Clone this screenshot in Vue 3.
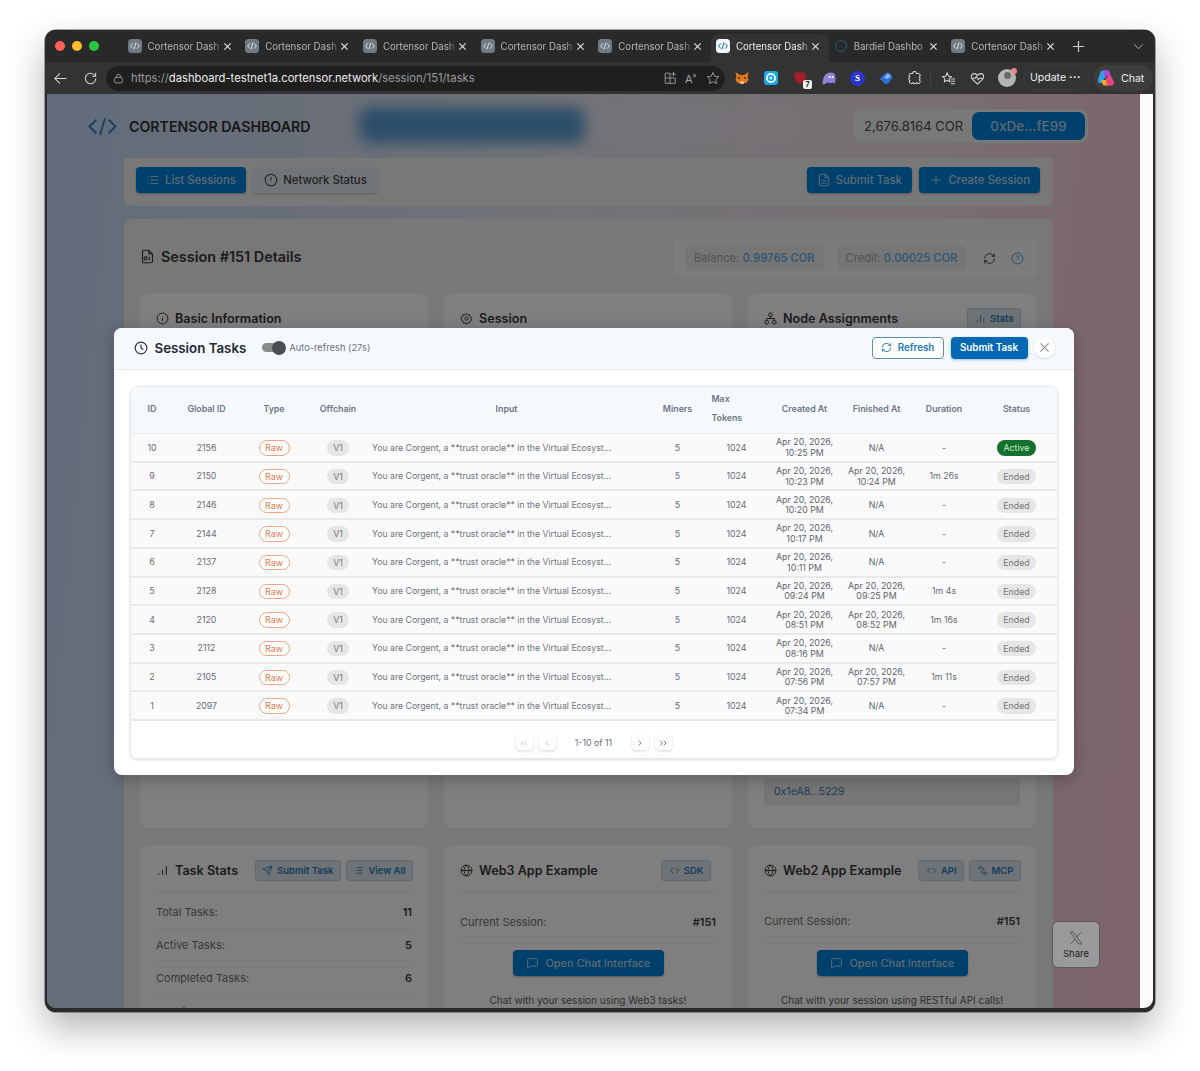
<script setup>
const tabs = [
  { title: 'Cortensor Dash' },
  { title: 'Cortensor Dash' },
  { title: 'Cortensor Dash' },
  { title: 'Cortensor Dash' },
  { title: 'Cortensor Dash' },
  { title: 'Cortensor Dash', active: true },
  { title: 'Bardiel Dashbo', ring: true },
  { title: 'Cortensor Dash' },
]

const tasks = [
  { id: 10, gid: 2156, created: ['Apr 20, 2026,', '10:25 PM'], finished: null, duration: '-', status: 'Active' },
  { id: 9, gid: 2150, created: ['Apr 20, 2026,', '10:23 PM'], finished: ['Apr 20, 2026,', '10:24 PM'], duration: '1m 26s', status: 'Ended' },
  { id: 8, gid: 2146, created: ['Apr 20, 2026,', '10:20 PM'], finished: null, duration: '-', status: 'Ended' },
  { id: 7, gid: 2144, created: ['Apr 20, 2026,', '10:17 PM'], finished: null, duration: '-', status: 'Ended' },
  { id: 6, gid: 2137, created: ['Apr 20, 2026,', '10:11 PM'], finished: null, duration: '-', status: 'Ended' },
  { id: 5, gid: 2128, created: ['Apr 20, 2026,', '09:24 PM'], finished: ['Apr 20, 2026,', '09:25 PM'], duration: '1m 4s', status: 'Ended' },
  { id: 4, gid: 2120, created: ['Apr 20, 2026,', '08:51 PM'], finished: ['Apr 20, 2026,', '08:52 PM'], duration: '1m 16s', status: 'Ended' },
  { id: 3, gid: 2112, created: ['Apr 20, 2026,', '08:16 PM'], finished: null, duration: '-', status: 'Ended' },
  { id: 2, gid: 2105, created: ['Apr 20, 2026,', '07:56 PM'], finished: ['Apr 20, 2026,', '07:57 PM'], duration: '1m 11s', status: 'Ended' },
  { id: 1, gid: 2097, created: ['Apr 20, 2026,', '07:34 PM'], finished: null, duration: '-', status: 'Ended' },
]

const inputText = 'You are Corgent, a **trust oracle** in the Virtual Ecosyst...'
const colWidths = [43, 66, 69, 59, 278, 64, 54, 82, 62, 73, 76]

const stats = [
  { label: 'Total Tasks:', value: 11 },
  { label: 'Active Tasks:', value: 5 },
  { label: 'Completed Tasks:', value: 6 },
  { label: 'Running Tasks:', value: 1 },
]
</script>

<template>
  <div class="screen">
    <div class="window">
      <!-- tab strip -->
      <div class="tabstrip">
        <div class="lights"><i class="red"></i><i class="yellow"></i><i class="green"></i></div>
        <div v-for="(tab, i) in tabs" :key="i" class="tab" :class="{ active: tab.active }">
          <span v-if="tab.ring" class="ring"></span>
          <svg v-else class="fav" viewBox="0 0 14 14">
            <rect width="14" height="14" rx="3.5" />
            <path d="M5 4.3 2.6 7 5 9.7M9 4.3 11.4 7 9 9.7M7.9 3.6 6.1 10.4" />
          </svg>
          <span class="tab-title">{{ tab.title }}</span>
          <svg class="tab-x" viewBox="0 0 10 10"><path d="M1.5 1.5 8.5 8.5M8.5 1.5 1.5 8.5" /></svg>
        </div>
        <svg class="newtab" viewBox="0 0 14 14"><path d="M7 1V13M1 7H13" /></svg>
        <svg class="tabmenu" viewBox="0 0 12 8"><path d="M1 1.5 6 6.5 11 1.5" /></svg>
      </div>

      <!-- browser toolbar -->
      <div class="toolbar">
        <svg class="tool back" viewBox="0 0 16 16"><path d="M14.5 8H2M7.5 2.5 2 8l5.5 5.5" /></svg>
        <svg class="tool reload" viewBox="0 0 16 16"><path d="M13.6 8a5.6 5.6 0 1 1-1.7-4L13.5 5.5M13.5 1.8V5.5H9.8" /></svg>
        <div class="omnibox">
          <svg class="lock" viewBox="0 0 12 12"><rect x="1.8" y="4.8" width="8.4" height="6" rx="1.5" /><path d="M4 4.8V3.4a2 2 0 0 1 4 0v1.4" /></svg>
          <span class="url">https://<b>dashboard-testnet1a.cortensor.network</b>/session/151/tasks</span>
          <svg class="omni-ic" viewBox="0 0 16 16"><path d="M8 2.500H2.500V14H14V8M2.500 8H14M8 2.500V14M12 1V6M9.500 3.500H14.500" /></svg>
          <span class="read-aloud">A<sup>»</sup></span>
          <svg class="omni-ic" viewBox="0 0 16 16"><path d="M8 1.700 10 6l4.600.6-3.400 3.200.9 4.600L8 12.200l-4.100 2.200.9-4.600L1.400 6.600 6 6Z" /></svg>
        </div>
        <div class="exts">
          <svg class="ext" viewBox="0 0 16 16"><path fill="#e2761b" d="M1.500 2 6 5h4l4.500-3-.8 5 .8 3-2.500 3.500-2.500-1h-3l-2.500 1L1.500 10l.8-3Z" /><path fill="#f6c9a0" d="M5.500 11.500h5L9.500 14h-3Z" /><circle cx="5" cy="8" r="1" fill="#333" /><circle cx="11" cy="8" r="1" fill="#333" /></svg>
          <svg class="ext" viewBox="0 0 16 16"><rect x="1" y="1" width="14" height="14" rx="3" fill="#1aa6e8" /><circle cx="8" cy="8" r="4.200" fill="none" stroke="#fff" stroke-width="1.800" /><path d="M6.500 8h3M8 6.500v3" stroke="#fff" stroke-width="1.100" /></svg>
          <span class="ext-badged">
            <svg class="ext" viewBox="0 0 16 16"><path fill="#a31d2b" d="M3 2.500h9l2 3-1 6-5 3-4-3-2-6Z" /></svg>
            <em>7</em>
          </span>
          <svg class="ext" viewBox="0 0 16 16"><path fill="#8f82d8" d="M1.500 14C2 6 5 2.500 9.500 2.500S15 6 14.500 10.500 12.500 13 11.500 12.500 9.500 14 8 13 6 13 5 13.500 2.500 15 1.500 14Z" /><circle cx="8.500" cy="7" r="1" fill="#fff" /><circle cx="11.500" cy="7" r="1" fill="#fff" /></svg>
          <span class="ext-s">S</span>
          <svg class="ext" viewBox="0 0 16 16"><path fill="#2e6fd8" d="M1.500 9 8 3c3-1.500 5.500 1.500 6.500 5L11 12.500c-1.500 2-4 1.500-5 .5L4 10.500Z" /><path fill="#8cb8f2" d="M6 7.500 10 3.500 13 6.500 9 9Z" /></svg>
          <svg class="tool puzzle" viewBox="0 0 16 16"><path d="M6 2.500a2 2 0 0 1 4 0c0 .5 2.500-.3 3.500.7s.2 2.800-.3 3.300a2 2 0 0 1 0 3c.5.5 1.300 2.300.3 3.300s-2.800.2-3.300-.3a2 2 0 0 1-3.500 0c-.5.5-2.300 1.300-3.300.3S2.500 10.500 3 10a2 2 0 0 1 0-3.500C2.500 6 1.700 4.200 2.700 3.200S5.500 3 6 2.500Z" /></svg>
          <i class="sep"></i>
          <svg class="tool favs" viewBox="0 0 16 16"><path d="M6.500 2 8 5.500l3 .4-2.300 2.200.6 3.400-2.800-1.600-2.900 1.600.6-3.400L1.800 5.900l3.200-.4ZM10.500 8.500H15M10.500 11H15M10.500 13.500H15" /></svg>
          <svg class="tool heart" viewBox="0 0 16 16"><path d="M8 14 2.200 8.300C.5 6.300 1.500 2.800 4.500 2.800 6 2.800 7.300 3.600 8 4.800c.7-1.200 2-2 3.500-2 3 0 4 3.500 2.300 5.500ZM2 7.800h3.500l1.200-2 2 3.500 1.300-1.500H14" /></svg>
          <span class="avatar"><i></i><b></b></span>
          <span class="update">Update <span class="dots">···</span></span>
          <span class="chat">
            <svg class="copilot" viewBox="0 0 18 18">
              <path fill="#2ea3e8" d="M6 1.500h4L8 8 5 14H3.500C1.500 14 .5 12 1 10.500L3.500 3C4 2 5 1.500 6 1.500Z" />
              <path fill="#a44fd8" d="M6 1.500h4.500c1 0 1.800.7 2 1.500L14 7H9.500L8 11Z" />
              <path fill="#f5a623" d="M12 16.500H7.500c-1 0-1.800-.7-2-1.500L4.500 11H9l1.500-3.500Z" />
              <path fill="#e8467c" d="M12 16.500h2.500c2 0 3-2 2.500-3.500L14 7h-3l-2 5 1 4Z" />
            </svg>
            Chat
          </span>
        </div>
      </div>

      <!-- browser content -->
      <div class="viewport">
        <div class="page">
          <header class="app-header">
            <div class="brand">
              <svg class="logo" viewBox="0 0 28 18"><path d="M8 2.500 1.500 9 8 15.500M20 2.500 26.500 9 20 15.500M16.500 1 11.500 17" /></svg>
              <span>CORTENSOR DASHBOARD</span>
            </div>
            <div class="blurred-nav"></div>
            <div class="wallet">
              <span>2,676.8164 COR</span>
              <span class="wallet-btn">0xDe...fE99</span>
            </div>
          </header>

          <main class="content">
            <section class="action-card">
              <div class="btn-row">
                <span class="btn solid">
                  <svg class="ic" viewBox="0 0 24 24"><path d="M8 6h13M8 12h13M8 18h13M3 6h1M3 12h1M3 18h1" /></svg>List Sessions
                </span>
                <span class="btn ghost">
                  <svg class="ic" viewBox="0 0 24 24"><circle cx="12" cy="12" r="10" /><path d="M12 7v6M12 16.500v.5" /></svg>Network Status
                </span>
              </div>
              <div class="btn-row">
                <span class="btn solid">
                  <svg class="ic" viewBox="0 0 24 24"><path d="M14 2H6a2 2 0 0 0-2 2v16a2 2 0 0 0 2 2h12a2 2 0 0 0 2-2V8ZM14 2v6h6M8 13h8M8 17h8" /></svg>Submit Task
                </span>
                <span class="btn solid">
                  <svg class="ic" viewBox="0 0 24 24"><path d="M12 4v16M4 12h16" /></svg>Create Session
                </span>
              </div>
            </section>

            <section class="session-card">
              <div class="session-head">
                <h2>
                  <svg class="ic head-ic" viewBox="0 0 24 24"><path d="M14 2H6a2 2 0 0 0-2 2v16a2 2 0 0 0 2 2h12a2 2 0 0 0 2-2V8ZM14 2v6h6" /><circle cx="9" cy="15" r="2.500" /><path d="M15 12.500V18" /></svg>
                  Session #151 Details
                </h2>
                <div class="balances">
                  <span class="chip bal">Balance: <b>0.99765 COR</b></span>
                  <span class="chip cred">Credit: <b>0.00025 COR</b></span>
                  <svg class="ic bal-ic" viewBox="0 0 24 24"><path d="M21 12a9 9 0 0 1-15.500 6.300L3 16M3 12a9 9 0 0 1 15.500-6.300L21 8M21 3v5h-5M3 21v-5h5" /></svg>
                  <svg class="ic bal-ic help" viewBox="0 0 24 24"><circle cx="12" cy="12" r="10" /><path d="M9.500 9.500a2.500 2.500 0 1 1 3.500 2.300c-.7.400-1 1-1 1.700M12 17v.5" /></svg>
                </div>
              </div>

              <div class="grid tall">
                <article class="panel">
                  <div class="panel-title">
                    <h3><svg class="ic" viewBox="0 0 24 24"><circle cx="12" cy="12" r="10" /><path d="M12 11v6M12 7.500v.5" /></svg>Basic Information</h3>
                  </div>
                </article>
                <article class="panel">
                  <div class="panel-title">
                    <h3><svg class="ic" viewBox="0 0 24 24"><circle cx="12" cy="12" r="3" /><path d="M12 2.500l2 3 3.500-.5 1 3.500 3 2-1.500 2 1.500 2.500-3 2-1 3.500-3.500-.5-2 3-2-3-3.500.5-1-3.500-3-2L3 12.500 1.500 10.500l3-2 1-3.500 3.500.5Z" /></svg>Session</h3>
                  </div>
                </article>
                <article class="panel">
                  <div class="panel-title">
                    <h3><svg class="ic" viewBox="0 0 24 24"><rect x="9" y="2" width="6" height="6" rx="1" /><rect x="2" y="16" width="6" height="6" rx="1" /><rect x="16" y="16" width="6" height="6" rx="1" /><path d="M12 8v4M5 16v-4h14v4" /></svg>Node Assignments</h3>
                    <span class="btn tint small stats-btn"><svg class="ic" viewBox="0 0 24 24"><path d="M5 20v-5M12 20V5M19 20v-9" /></svg>Stats</span>
                  </div>
                  <div class="addr">0x1eA8...5229</div>
                </article>
              </div>

              <div class="grid">
                <article class="panel">
                  <div class="panel-title ruled">
                    <h3><svg class="ic" viewBox="0 0 24 24"><path d="M5 20v-3M12 20v-9M19 20V4" /></svg>Task Stats</h3>
                    <div class="btn-row tight">
                      <span class="btn tint small"><svg class="ic" viewBox="0 0 24 24"><path d="M22 2 15 22l-4-9-9-4ZM22 2 11 13" /></svg>Submit Task</span>
                      <span class="btn tint small"><svg class="ic" viewBox="0 0 24 24"><path d="M8 6h13M8 12h13M8 18h13M3 6h1M3 12h1M3 18h1" /></svg>View All</span>
                    </div>
                  </div>
                  <div class="stat-list">
                    <div v-for="s in stats" :key="s.label" class="stat">
                      <span>{{ s.label }}</span><b>{{ s.value }}</b>
                    </div>
                  </div>
                </article>

                <article class="panel">
                  <div class="panel-title ruled">
                    <h3><svg class="ic" viewBox="0 0 24 24"><circle cx="12" cy="12" r="10" /><path d="M2 12h20M12 2c6 6 6 14 0 20M12 2c-6 6-6 14 0 20" /></svg>Web3 App Example</h3>
                    <span class="btn tint small sdk"><svg class="ic" viewBox="0 0 24 24"><path d="M9 6l-6 6 6 6M15 6l6 6-6 6" /></svg>SDK</span>
                  </div>
                  <div class="current web3"><span>Current Session:</span><b>#151</b></div>
                  <div class="chat-cta">
                    <span class="btn solid wide"><svg class="ic" viewBox="0 0 24 24"><path d="M21 15a2 2 0 0 1-2 2H7l-4 4V5a2 2 0 0 1 2-2h14a2 2 0 0 1 2 2Z" /></svg>Open Chat Interface</span>
                    <p>Chat with your session using Web3 tasks!</p>
                  </div>
                </article>

                <article class="panel">
                  <div class="panel-title ruled">
                    <h3><svg class="ic" viewBox="0 0 24 24"><circle cx="12" cy="12" r="10" /><path d="M2 12h20M12 2c6 6 6 14 0 20M12 2c-6 6-6 14 0 20" /></svg>Web2 App Example</h3>
                    <div class="btn-row tight">
                      <span class="btn tint small"><svg class="ic" viewBox="0 0 24 24"><path d="M9 6l-6 6 6 6M15 6l6 6-6 6" /></svg>API</span>
                      <span class="btn tint small"><svg class="ic" viewBox="0 0 24 24"><circle cx="6" cy="6" r="3" /><circle cx="18" cy="18" r="3" /><path d="M9 6h3a3 3 0 0 1 0 6h-0a3 3 0 0 0 0 6h3" /></svg>MCP</span>
                    </div>
                  </div>
                  <div class="current"><span>Current Session:</span><b>#151</b></div>
                  <div class="chat-cta">
                    <span class="btn solid wide"><svg class="ic" viewBox="0 0 24 24"><path d="M21 15a2 2 0 0 1-2 2H7l-4 4V5a2 2 0 0 1 2-2h14a2 2 0 0 1 2 2Z" /></svg>Open Chat Interface</span>
                    <p>Chat with your session using RESTful API calls!</p>
                  </div>
                </article>
              </div>
            </section>
          </main>

          <!-- dim layer and dialog -->
          <div class="backdrop">
            <div class="modal">
              <div class="modal-head">
                <svg class="clock" viewBox="0 0 24 24"><circle cx="12" cy="12" r="10" /><path d="M12 6v6l4 2.500" /></svg>
                <h2>Session Tasks</h2>
                <span class="switch"><i></i></span>
                <span class="auto">Auto-refresh (27s)</span>
                <span class="head-actions">
                  <span class="refresh">
                    <svg viewBox="0 0 24 24"><path d="M21 12a9 9 0 0 1-15.500 6.300L3 16M3 12a9 9 0 0 1 15.500-6.300L21 8M21 3v5h-5M3 21v-5h5" /></svg>Refresh
                  </span>
                  <span class="submit">Submit Task</span>
                  <span class="close"><svg viewBox="0 0 12 12"><path d="M1.500 1.500l9 9M10.500 1.500l-9 9" /></svg></span>
                </span>
              </div>

              <div class="modal-body">
                <div class="table-card">
                  <table>
                    <colgroup>
                      <col v-for="(w, i) in colWidths" :key="i" :style="{ width: w + 'px' }" />
                    </colgroup>
                    <thead>
                      <tr>
                        <th>ID</th>
                        <th>Global ID</th>
                        <th>Type</th>
                        <th>Offchain</th>
                        <th>Input</th>
                        <th>Miners</th>
                        <th class="maxtok">Max<br />Tokens</th>
                        <th>Created At</th>
                        <th>Finished At</th>
                        <th>Duration</th>
                        <th class="last">Status</th>
                      </tr>
                    </thead>
                    <tbody>
                      <tr v-for="t in tasks" :key="t.id">
                        <td>{{ t.id }}</td>
                        <td>{{ t.gid }}</td>
                        <td><span class="pill raw">Raw</span></td>
                        <td><span class="pill grey v1">V1</span></td>
                        <td class="input">{{ inputText }}</td>
                        <td>5</td>
                        <td>1024</td>
                        <td class="date">{{ t.created[0] }}<br />{{ t.created[1] }}</td>
                        <td class="date">
                          <template v-if="t.finished">{{ t.finished[0] }}<br />{{ t.finished[1] }}</template>
                          <template v-else>N/A</template>
                        </td>
                        <td>{{ t.duration }}</td>
                        <td class="last">
                          <span class="pill status" :class="t.status === 'Active' ? 'on' : 'grey'">{{ t.status }}</span>
                        </td>
                      </tr>
                    </tbody>
                  </table>
                  <div class="pager">
                    <span class="pg dim"><svg viewBox="0 0 12 12"><path d="M5.500 3 2.500 6l3 3M9.500 3l-3 3 3 3" /></svg></span>
                    <span class="pg dim"><svg viewBox="0 0 12 12"><path d="M7.500 3l-3 3 3 3" /></svg></span>
                    <span class="pg-text">1-10 of 11</span>
                    <span class="pg"><svg viewBox="0 0 12 12"><path d="M4.500 3l3 3-3 3" /></svg></span>
                    <span class="pg"><svg viewBox="0 0 12 12"><path d="M2.500 3l3 3-3 3M6.500 3l3 3-3 3" /></svg></span>
                  </div>
                </div>
              </div>
            </div>

            <div class="share">
              <svg viewBox="0 0 24 24"><path d="M3 3h5l13 18h-5ZM20 3l-7 8M4 21l7-8" /></svg>
              <span>Share</span>
            </div>
          </div>
        </div>
        <div class="scrolltrack"></div>
      </div>
    </div>
  </div>
</template>

<style>
html,
body {
  margin: 0;
  background: #fff;
}
</style>

<style scoped>
.screen {
  width: 1200px;
  height: 1071px;
  padding: 30px 45px 59px;
  box-sizing: border-box;
  overflow: hidden;
  background: #fff;
  font-family: Inter, "Noto Sans", sans-serif;
}
.window {
  height: 982px;
  background: #2b2b2b;
  border-radius: 11px;
  box-shadow: 0 0 0 .5px #555, 0 16px 36px rgba(0, 0, 0, .3);
  display: flex;
  flex-direction: column;
  overflow: hidden;
}

/* tab strip */
.tabstrip {
  height: 32px;
  display: flex;
  align-items: flex-end;
  background: #292929;
  flex: none;
  position: relative;
}
.lights {
  width: 77.500px;
  height: 28px;
  padding-left: 10px;
  padding-bottom: 4px;
  box-sizing: border-box;
  display: flex;
  gap: 7px;
  align-items: center;
  flex: none;
}
.lights i {
  width: 10px;
  height: 10px;
  border-radius: 50%;
}
.red { background: #ff5f57; }
.yellow { background: #febc2e; }
.green { background: #28c840; }
.tab {
  width: 117.700px;
  height: 28px;
  flex: none;
  box-sizing: border-box;
  padding: 0 0 4px 5px;
  display: flex;
  align-items: center;
  border-radius: 8px 8px 0 0;
  color: #b5b5b5;
  font-size: 9.700px;
  position: relative;
}
.tab.active {
  background: #333;
  color: #eee;
}
.fav {
  width: 14px;
  height: 14px;
  flex: none;
  fill: #6f7a82;
}
.fav path {
  fill: none;
  stroke: #dde;
  stroke-width: 1;
}
.active .fav { fill: #f4f7fb; }
.active .fav path { stroke: #1670bd; }
.ring {
  width: 12px;
  height: 12px;
  margin: 0 1px;
  box-sizing: border-box;
  border-radius: 50%;
  border: 1.500px solid #1f5f72;
  flex: none;
}
.tab-title {
  width: 73px;
  margin-left: 6px;
  white-space: nowrap;
  -webkit-mask-image: linear-gradient(90deg, #000 88%, rgba(0, 0, 0, .25));
  mask-image: linear-gradient(90deg, #000 88%, rgba(0, 0, 0, .25));
}
.tab-x {
  width: 9px;
  height: 9px;
  margin-left: 2px;
  flex: none;
  fill: none;
  stroke: #ddd;
  stroke-width: 1.300;
}
.newtab {
  position: absolute;
  left: 1026.500px;
  top: 9.500px;
  width: 13px;
  height: 13px;
  fill: none;
  stroke: #ccc;
  stroke-width: 1.300;
}
.tabmenu {
  position: absolute;
  left: 1087.500px;
  top: 13px;
  width: 11px;
  height: 7px;
  fill: none;
  stroke: #bbb;
  stroke-width: 1.100;
}

/* toolbar */
.toolbar {
  height: 32px;
  flex: none;
  display: flex;
  align-items: center;
  background: #333;
  padding-left: 8px;
}
.tool {
  width: 15px;
  height: 15px;
  fill: none;
  stroke: #d6d6d6;
  stroke-width: 1.100;
  flex: none;
}
.back { margin-right: 15px; }
.reload { margin-right: 8px; }
.omnibox {
  width: 619px;
  height: 25px;
  flex: none;
  box-sizing: border-box;
  border-radius: 13px;
  background: #1f1f1f;
  display: flex;
  align-items: center;
  padding: 0 5px 0 7px;
}
.lock {
  width: 11px;
  height: 11px;
  fill: none;
  stroke: #a0a0a0;
  stroke-width: 1;
  flex: none;
}
.url {
  margin-left: 7px;
  font-size: 11.230px;
  color: #9a9a9a;
  flex: 1;
  white-space: nowrap;
}
.url b {
  color: #ececec;
  font-weight: 400;
}
.omni-ic {
  width: 14px;
  height: 14px;
  fill: none;
  stroke: #a5a5a5;
  stroke-width: 1;
}
.read-aloud {
  width: 14px;
  margin: 0 7px 0 8px;
  font-size: 11px;
  color: #a5a5a5;
}
.read-aloud sup {
  font-size: 7px;
}
.exts {
  display: flex;
  align-items: center;
  flex: 1;
  padding-left: 9px;
}
.ext {
  width: 16px;
  height: 16px;
  display: block;
}
.exts > .ext,
.exts > .ext-badged,
.exts > .ext-s { margin-right: 13px; }
.ext-badged {
  position: relative;
  width: 16px;
  height: 16px;
}
.ext-badged em {
  position: absolute;
  right: -4px;
  bottom: -3px;
  width: 9px;
  height: 9px;
  background: #eee;
  border-radius: 2px;
  color: #222;
  font: 700 7px/9px Inter, sans-serif;
  text-align: center;
}
.ext-s {
  width: 15px;
  height: 15px;
  border-radius: 50%;
  background: #2a35c9;
  color: #fff;
  font: 700 9px/15px "Liberation Serif", serif;
  text-align: center;
}
.puzzle { margin-right: 8px; }
.sep {
  width: 1px;
  height: 17px;
  background: #444;
  margin-right: 10px;
}
.favs { margin-right: 14px; }
.heart { margin-right: 13px; }
.avatar {
  position: relative;
  width: 18px;
  height: 18px;
  border-radius: 50%;
  background: #b5b5b5;
  flex: none;
}
.avatar i {
  position: absolute;
  left: 5.500px;
  top: 3px;
  width: 7px;
  height: 7px;
  border-radius: 50%;
  background: #6a6a6a;
}
.avatar b {
  position: absolute;
  right: -1px;
  top: -1px;
  width: 6px;
  height: 6px;
  border-radius: 50%;
  background: #f08a8a;
}
.update {
  height: 26px;
  margin-left: 7px;
  padding: 0 6px;
  border-radius: 13px;
  border: 1px solid #3d3d3d;
  box-sizing: border-box;
  width: 66px;
  font-size: 10.500px;
  line-height: 24px;
  color: #eee;
  white-space: nowrap;
}
.dots {
  font-weight: 700;
  letter-spacing: .5px;
}
.chat {
  margin-left: 5px;
  height: 26px;
  width: 59px;
  padding-left: 3px;
  box-sizing: border-box;
  border-radius: 13px;
  background: #3d3d3d;
  display: flex;
  align-items: center;
  gap: 6px;
  font-size: 10.500px;
  color: #eee;
}
.copilot {
  width: 18px;
  height: 18px;
  flex: none;
}

/* page underneath */
.viewport {
  flex: 1;
  margin: 0 2px 4px;
  display: flex;
  border-radius: 0 0 9px 9px;
  overflow: hidden;
  min-height: 0;
}
.page {
  width: 1093px;
  flex: none;
  position: relative;
  overflow: hidden;
  background: linear-gradient(96deg, #c3d8f6 0%, #e4e6ee 45%, #f0dde6 75%, #fcc4d8 100%);
}
.scrolltrack {
  flex: 1;
  background: #fbfbfb;
}
.app-header {
  height: 64px;
  padding: 0 52px 0 41px;
  box-sizing: border-box;
  display: flex;
  align-items: center;
  gap: 47px;
}
.brand {
  display: flex;
  align-items: center;
  gap: 12px;
  width: 224px;
  flex: none;
  font-size: 14.200px;
  font-weight: 600;
  color: #303030;
  white-space: nowrap;
}
.logo {
  width: 29px;
  height: 19px;
  fill: none;
  stroke: #2c7cc0;
  stroke-width: 1.800;
  flex: none;
}
.blurred-nav {
  width: 226px;
  height: 36px;
  margin-top: -2px;
  border-radius: 10px;
  background: #5a9cd0;
  box-shadow: 226px 0 20px rgba(255, 255, 255, .08);
  filter: blur(7px);
  flex: none;
}
.wallet {
  margin-left: auto;
  height: 34px;
  width: 235px;
  box-sizing: border-box;
  padding: 3px;
  border-radius: 9px;
  background: #f0f0f0;
  display: flex;
  align-items: center;
  justify-content: flex-end;
  gap: 9px;
  font-size: 13px;
  color: #4c4c4c;
  white-space: nowrap;
}
.wallet-btn {
  width: 113px;
  height: 28px;
  line-height: 28px;
  border-radius: 7px;
  background: #0080d8;
  color: #b8d4ea;
  text-align: center;
  font-size: 13.500px;
  font-weight: 500;
}
.content {
  width: 929px;
  margin-left: 77px;
  display: flex;
  flex-direction: column;
  gap: 13px;
}
.action-card {
  height: 48px;
  padding: 9px 13px 0 12px;
  box-sizing: border-box;
  display: flex;
  justify-content: space-between;
  background: #f0f0f0;
  border-radius: 0 0 8px 8px;
}
.btn-row {
  display: flex;
  gap: 7.500px;
}
.btn-row.tight { gap: 7px; }
.btn {
  height: 26px;
  display: inline-flex;
  align-items: center;
  gap: 5px;
  padding: 0 10px;
  box-sizing: border-box;
  border-radius: 4px;
  font-size: 11.300px;
  font-weight: 500;
  white-space: nowrap;
}
.ic {
  width: 14px;
  height: 14px;
  fill: none;
  stroke: currentColor;
  stroke-width: 1.800;
  flex: none;
}
.btn.solid {
  background: #0080d8;
  color: #b8d4ea;
  box-shadow: 0 1px 2px rgba(0, 0, 0, .3);
}
.btn.ghost {
  padding: 0 11px;
  background: #e6ecf2;
  color: #404040;
  box-shadow: 0 1px 2px rgba(0, 0, 0, .2);
}
.session-card {
  background: #f0f0f0;
  border-radius: 8px 8px 0 0;
  padding: 20px 16px 0;
  flex: 1;
}
.session-head {
  height: 38px;
  margin-bottom: 16px;
  display: flex;
  align-items: center;
  justify-content: space-between;
}
.session-head h2 {
  margin: -4px 0 0;
  font-size: 14.400px;
  font-weight: 600;
  color: #383838;
  display: flex;
  align-items: center;
  gap: 6px;
}
.head-ic {
  width: 15px;
  height: 15px;
}
.balances {
  width: 363px;
  height: 38px;
  box-sizing: border-box;
  padding: 0 12px 0 11px;
  border-radius: 5px;
  background: #f8f8f8;
  display: flex;
  align-items: center;
  font-size: 11.200px;
  color: #a8a8a8;
  white-space: nowrap;
}
.chip {
  height: 26px;
  line-height: 26px;
  box-sizing: border-box;
  padding: 0 9px;
  border-radius: 5px;
  background: #ececec;
}
.chip b {
  font-weight: 600;
  color: #6bb0e6;
}
.bal { margin-right: 13px; }
.bal-ic {
  width: 13px;
  height: 13px;
  color: #444;
  margin-left: 17px;
}
.help {
  margin-left: 15px;
  color: #3a8cd0;
}
.grid {
  display: grid;
  grid-template-columns: repeat(3, 288px);
  gap: 16px;
}
.grid.tall {
  height: 535px;
  margin-bottom: 17px;
}
.panel {
  background: #fff;
  border-radius: 8px;
  padding: 16px;
  box-sizing: border-box;
  display: flex;
  flex-direction: column;
  height: 535px;
  box-shadow: 0 1px 2px rgba(0, 0, 0, .04);
}
.panel-title {
  display: flex;
  justify-content: space-between;
  align-items: center;
  height: 19px;
}
.panel-title.ruled {
  height: 34px;
  margin-top: -8px;
  padding-bottom: 5px;
  border-bottom: 1px solid #efefef;
}
.panel h3 {
  margin: 0;
  font-size: 12.600px;
  font-weight: 600;
  color: #383838;
  display: flex;
  align-items: center;
  gap: 6px;
  white-space: nowrap;
}
.panel h3 .ic {
  width: 13px;
  height: 13px;
}
.btn.tint {
  background: #dce6ee;
  color: #2a78b8;
  box-shadow: 0 0 0 1px #c4d2de, 0 1px 2px rgba(0, 0, 0, .15);
  border-radius: 3px;
}
.btn.small {
  height: 19px;
  padding: 0 6.500px;
  gap: 4px;
  font-size: 9.500px;
  font-weight: 600;
}
.btn.small .ic {
  width: 11px;
  height: 11px;
}
.sdk {
  margin-right: 6px;
}
.stats-btn {
  height: 20px;
  background: #e8eff5;
  box-shadow: 0 0 0 1px #7fa8c8;
}
.addr {
  margin-top: auto;
  margin-bottom: 6px;
  height: 28px;
  line-height: 28px;
  padding-left: 10px;
  background: #ececec;
  border-radius: 4px;
  font-size: 10.500px;
  color: #3a78b8;
}
.stat-list {
  padding-top: 2.600px;
}
.stat {
  height: 33.300px;
  box-sizing: border-box;
  display: flex;
  justify-content: space-between;
  align-items: center;
  border-bottom: 1px solid #f3f3f3;
  font-size: 11px;
  color: #707070;
}
.stat b,
.current b {
  color: #383838;
  font-weight: 600;
}
.current {
  height: 45px;
  padding-top: 11px;
  box-sizing: border-box;
  display: flex;
  justify-content: space-between;
  align-items: center;
  border-bottom: 1px solid #f3f3f3;
  font-size: 11px;
  color: #707070;
}
.current.web3 { padding-top: 14px; }
.chat-cta {
  text-align: center;
  padding-top: 12px;
}
.btn.wide {
  padding: 0 13px;
  gap: 7px;
  font-size: 10.900px;
  font-weight: 500;
}
.btn.wide .ic {
  width: 13px;
  height: 13px;
}
.chat-cta p {
  margin: 18px 0 0;
  font-size: 10px;
  color: #5c5c5c;
}

/* dim layer */
.backdrop {
  position: absolute;
  inset: 0;
  background: rgba(0, 0, 0, .5);
  display: flex;
  align-items: center;
  justify-content: center;
}
.modal {
  width: 960px;
  margin-top: 1px;
  background: #fff;
  border-radius: 8px;
  overflow: hidden;
  box-shadow: 0 4px 16px rgba(0, 0, 0, .25);
}
.modal-head {
  height: 42px;
  display: flex;
  align-items: center;
  padding: 0 19px 2px 20px;
  background: #f6f9fb;
  border-bottom: 1px solid #e9edf0;
  box-sizing: border-box;
}
.clock {
  width: 14px;
  height: 14px;
  fill: none;
  stroke: #2d3540;
  stroke-width: 2;
  flex: none;
}
.modal-head h2 {
  margin: 0 16px 0 7px;
  font-size: 13.300px;
  font-weight: 600;
  color: #1f2937;
  white-space: nowrap;
}
.switch {
  position: relative;
  width: 23px;
  height: 9px;
  border-radius: 5px;
  background: #8b8b8b;
  flex: none;
}
.switch i {
  position: absolute;
  right: -1px;
  top: -2.500px;
  width: 14px;
  height: 14px;
  border-radius: 50%;
  background: #4a4d52;
}
.auto {
  margin-left: 4px;
  font-size: 9.300px;
  color: #6b7280;
  white-space: nowrap;
}
.head-actions {
  margin-left: auto;
  display: flex;
  align-items: center;
  gap: 7px;
}
.refresh {
  width: 72px;
  height: 22px;
  box-sizing: border-box;
  border: 1px solid #5f8db0;
  border-radius: 4px;
  background: #fff;
  display: flex;
  align-items: center;
  justify-content: center;
  gap: 6px;
  font-size: 9.800px;
  font-weight: 600;
  color: #1f78bb;
}
.refresh svg {
  width: 11px;
  height: 11px;
  fill: none;
  stroke: #1f78bb;
  stroke-width: 2;
}
.submit {
  width: 77px;
  height: 22px;
  line-height: 22px;
  border-radius: 4px;
  background: #0568b3;
  color: #fff;
  font-size: 9.800px;
  font-weight: 600;
  text-align: center;
  box-shadow: 0 1px 3px rgba(5, 104, 179, .4);
}
.close {
  width: 21px;
  height: 21px;
  margin-left: -1px;
  border-radius: 50%;
  background: #fff;
  box-shadow: 0 1px 3px rgba(0, 0, 0, .12);
  display: flex;
  align-items: center;
  justify-content: center;
}
.close svg {
  width: 11px;
  height: 11px;
  fill: none;
  stroke: #8a9099;
  stroke-width: 1.200;
}
.modal-body {
  padding: 16px;
}
.table-card {
  border: 1px solid #e5e9ed;
  border-radius: 7px;
  overflow: hidden;
  box-shadow: 0 1px 3px rgba(0, 0, 0, .14);
}
table {
  width: 926px;
  border-collapse: separate;
  border-spacing: 0;
  table-layout: fixed;
}
th {
  height: 47px;
  padding: 0 0 4px;
  background: #f6f9fb;
  font-size: 8.800px;
  font-weight: 600;
  color: #6b7686;
  text-align: center;
  white-space: nowrap;
  border-bottom: 1px solid #e8ecef;
  box-sizing: border-box;
}
.maxtok {
  text-align: left;
  padding-left: 2px;
  line-height: 19.500px;
}
td {
  height: 28.700px;
  padding: 1px 0 0;
  background: #fafafa;
  border-bottom: 2px solid #e9e9e9;
  box-sizing: border-box;
  font-size: 8.800px;
  line-height: 10.500px;
  color: #666b72;
  text-align: center;
  white-space: nowrap;
}
td.input {
  text-align: left;
  padding-left: 4.500px;
  font-size: 8.700px;
  color: #6f747b;
}
td.date {
  color: #5f646b;
}
.last {
  padding-right: 4px;
}
.pill {
  display: inline-block;
  height: 15.500px;
  line-height: 15.500px;
  border-radius: 8px;
  box-sizing: border-box;
  vertical-align: middle;
}
.raw {
  width: 31px;
  line-height: 13.500px;
  background: #fff;
  border: 1px solid #efa686;
  color: #e9784a;
}
.grey {
  background: #e6e6e6;
  color: #767676;
}
.v1 { width: 22px; }
.status { width: 39.500px; }
.on {
  background: #14702a;
  color: #cdebd4;
}
.pager {
  height: 37px;
  padding-top: 7px;
  box-sizing: border-box;
  display: flex;
  align-items: center;
  justify-content: center;
}
.pg {
  width: 17px;
  height: 15px;
  margin: 0 3px;
  border-radius: 4px;
  background: #fff;
  box-shadow: 0 1px 3px rgba(0, 0, 0, .16);
  display: flex;
  align-items: center;
  justify-content: center;
}
.pg svg {
  width: 10px;
  height: 10px;
  fill: none;
  stroke: #5b6470;
  stroke-width: 1;
}
.pg.dim svg { stroke: #bfc5cc; }
.pg-text {
  width: 70px;
  text-align: center;
  font-size: 8.800px;
  color: #66707c;
}

.share {
  position: absolute;
  left: 1005px;
  top: 827px;
  width: 48px;
  height: 47px;
  box-sizing: border-box;
  border: 1px solid #5a5a5a;
  border-radius: 6px;
  background: #9a9a9a;
  display: flex;
  flex-direction: column;
  align-items: center;
  justify-content: center;
  gap: 2px;
  font-size: 9.500px;
  color: #222;
}
.share svg {
  width: 16px;
  height: 16px;
  fill: none;
  stroke: #444;
  stroke-width: 1.100;
}
</style>
